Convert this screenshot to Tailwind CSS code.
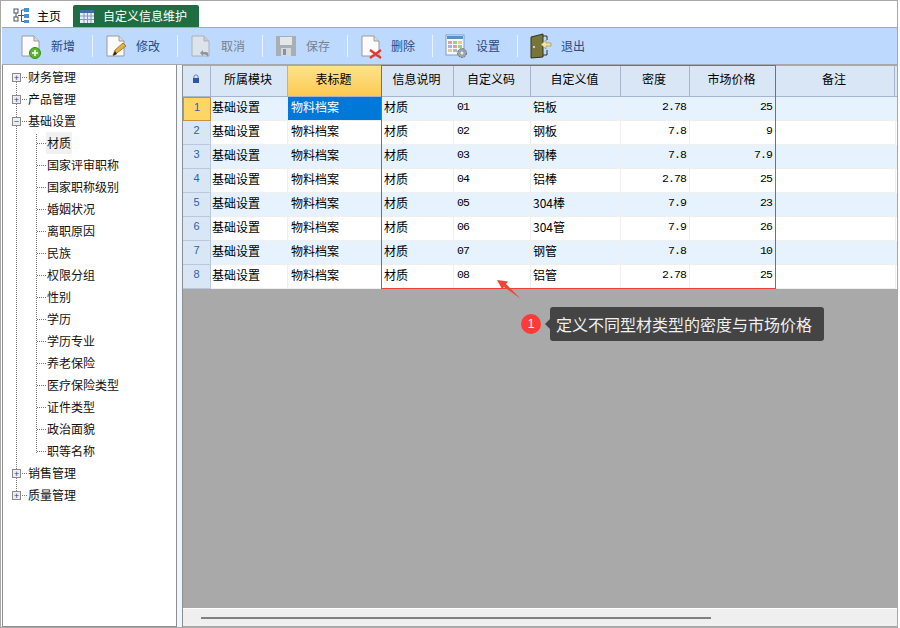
<!DOCTYPE html>
<html lang="zh"><head><meta charset="utf-8"><script src="https://cdn.jsdelivr.net/npm/@tailwindcss/browser@4"></script></head>
<body class="bg-white">
<div class="relative w-[900px] h-[628px] overflow-hidden bg-white text-[12px] leading-none text-black font-['Noto_Sans_CJK_SC','Liberation_Sans',sans-serif]">
 <div class="flex flex-col w-[898px] h-[628px] pt-[1px] pl-[1px] border-t border-l border-r border-b border-[#a8a8a8]">
  <!-- tabs -->
  <div class="flex items-end h-[25px] shrink-0 bg-white">
   <div class="flex items-center h-[23px] w-[71px] pl-[11px] gap-[7px]">
    <svg class="w-[17px] h-[17px]" viewBox="0 0 17 17"><rect x="1" y="2" width="4" height="4" fill="#fff" stroke="#44556e"/><rect x="1" y="10" width="4" height="4" fill="#fff" stroke="#44556e"/><rect x="11" y="1" width="5" height="4" fill="#4a8fd0"/><rect x="11" y="7" width="5" height="4" fill="#4a8fd0"/><rect x="11" y="13" width="5" height="3" fill="#4a8fd0"/><path d="M5 8.500H11M8.500 3V14.500M8.500 3H11M8.500 14.500H11M3 6V10" stroke="#555" fill="none"/></svg>
    <span>主页</span>
   </div>
   <div class="flex items-center h-[22px] w-[126px] bg-[#1f6e43] rounded-t-[2px] pl-[7px] gap-[9px] text-white">
    <svg class="w-[14px] h-[13px]" viewBox="0 0 14 13"><rect width="14" height="13" fill="#e8eef5"/><rect width="14" height="3" fill="#3f6ea8"/><path d="M0 6H14M0 9.500H14M4 3V13M7.500 3V13M11 3V13" stroke="#7d9cc4"/></svg>
    <span>自定义信息维护</span>
   </div>
  </div>
  <!-- toolbar -->
  <div class="flex items-center h-[37px] shrink-0 bg-[#bdd9fd] border-t border-[#a8a8a8] pl-[6px] text-[#2c4a85]">
   <div class="flex items-center w-[85px] h-full pl-[12px] gap-[9px]">
    <svg class="w-[22px] h-[26px]" viewBox="0 0 22 26"><path d="M2 3H14L19 8V23H2Z" fill="#fbfbfb" stroke="#9a9a9a"/><path d="M14 3V8H19" fill="#ddd" stroke="#9a9a9a"/><circle cx="15" cy="20" r="5.500" fill="#5cb531" stroke="#3f8a1f"/><path d="M12 20H18M15 17V23" stroke="#fff" stroke-width="1.500"/></svg>
    <span>新增</span>
   </div>
   <div class="w-px h-[22px] bg-[#e9f3ff] -ml-px"></div>
   <div class="flex items-center w-[85px] h-full pl-[12px] gap-[9px]">
    <svg class="w-[22px] h-[26px]" viewBox="0 0 22 26"><path d="M2 3H14L19 8V23H2Z" fill="#fbfbfb" stroke="#9a9a9a"/><path d="M14 3V8H19" fill="#ddd" stroke="#9a9a9a"/><path d="M8 22L10 17L18 10L21 13L12 20Z" fill="#e5b13d" stroke="#7a5b1c" stroke-width=".7"/><path d="M8 23L10 18L12 21Z" fill="#222"/></svg>
    <span>修改</span>
   </div>
   <div class="w-px h-[22px] bg-[#e9f3ff] -ml-px"></div>
   <div class="flex items-center w-[85px] h-full pl-[12px] gap-[9px] text-[#77828f]">
    <svg class="w-[22px] h-[26px]" viewBox="0 0 22 26"><path d="M2 3H14L19 8V23H2Z" fill="#dde3ea" stroke="#aab1ba"/><path d="M14 3V8H19" fill="#c9ced5" stroke="#aab1ba"/><path d="M10 20L13 17V19H16C18 19 19 21 18 24C17 22 16 21.500 13 21.500V23Z" fill="#8d959e"/></svg>
    <span>取消</span>
   </div>
   <div class="w-px h-[22px] bg-[#e9f3ff] -ml-px"></div>
   <div class="flex items-center w-[85px] h-full pl-[12px] gap-[9px] text-[#77828f]">
    <svg class="w-[22px] h-[26px]" viewBox="0 0 22 26"><path d="M1 3H21V23H1Z" fill="#a9aeb4"/><rect x="5" y="4" width="12" height="8" fill="#e4e7ea"/><rect x="6" y="15" width="10" height="8" fill="#d5d8dc"/><rect x="8" y="16" width="3" height="6" fill="#8d9298"/></svg>
    <span>保存</span>
   </div>
   <div class="w-px h-[22px] bg-[#e9f3ff] -ml-px"></div>
   <div class="flex items-center w-[85px] h-full pl-[12px] gap-[9px]">
    <svg class="w-[22px] h-[26px]" viewBox="0 0 22 26"><path d="M2 3H14L19 8V23H2Z" fill="#fbfbfb" stroke="#9a9a9a"/><path d="M14 3V8H19" fill="#ddd" stroke="#9a9a9a"/><path d="M10 17L21 25M21 17L10 25" stroke="#e2382b" stroke-width="2.200"/></svg>
    <span>删除</span>
   </div>
   <div class="w-px h-[22px] bg-[#e9f3ff] -ml-px"></div>
   <div class="flex items-center w-[85px] h-full pl-[12px] gap-[9px]">
    <svg class="w-[22px] h-[26px]" viewBox="0 0 22 26"><rect x="1" y="2" width="18" height="20" fill="#f5f8fb" stroke="#7e9fc4"/><rect x="2" y="3" width="16" height="3" fill="#5d8fc9"/><rect x="3" y="8" width="4" height="3" fill="#e89d8d"/><rect x="8" y="8" width="4" height="3" fill="#9ccf8b"/><rect x="13" y="8" width="4" height="3" fill="#e8cf80"/><rect x="3" y="12" width="4" height="3" fill="#9db9de"/><rect x="8" y="12" width="4" height="3" fill="#e89d8d"/><rect x="13" y="12" width="4" height="3" fill="#9ccf8b"/><rect x="3" y="16" width="4" height="3" fill="#e8cf80"/><rect x="8" y="16" width="4" height="3" fill="#9db9de"/><circle cx="17" cy="20" r="4.500" fill="#9aa2aa" stroke="#6b7278" stroke-dasharray="2 1"/><circle cx="17" cy="20" r="1.500" fill="#eee"/></svg>
    <span>设置</span>
   </div>
   <div class="w-px h-[22px] bg-[#e9f3ff] -ml-px"></div>
   <div class="flex items-center w-[85px] h-full pl-[12px] gap-[9px]">
    <svg class="w-[22px] h-[26px]" viewBox="0 0 22 26"><path d="M1 4L13 1V24L1 25Z" fill="#77753a" stroke="#33331c"/><path d="M13 3H17V7M17 17V22H13" fill="none" stroke="#33331c"/><circle cx="4" cy="14" r="1" fill="#eee"/><path d="M21 10H16V7L11 11.500L16 16V13H21Z" fill="#f6e3a2" stroke="#9c9356" stroke-width=".7"/></svg>
    <span>退出</span>
   </div>
  </div>
  <!-- body -->
  <div class="flex flex-1 min-h-0 border-t border-[#a8a8a8]">
   <!-- tree -->
   <div class="relative w-[175px] shrink-0 border border-[#8f8f8f] border-t-0 bg-white pt-[1px] text-[#111]">
    <div class="absolute left-[13px] top-[17px] h-[413px] border-l border-dotted border-[#777]"></div>
    <div class="absolute left-[33px] top-[69px] h-[319px] border-l border-dotted border-[#777]"></div>
    <div class="flex items-center h-[22px] pl-[9px] relative"><span class="flex items-center justify-center w-[9px] h-[9px] border border-[#8a8a8a] bg-[#eeeeee] text-[#29408f] text-[9px]">+</span><span class="w-[5px] border-t border-dotted border-[#777] ml-[1px] mr-[1px]"></span><span>财务管理</span></div>
    <div class="flex items-center h-[22px] pl-[9px] relative"><span class="flex items-center justify-center w-[9px] h-[9px] border border-[#8a8a8a] bg-[#eeeeee] text-[#29408f] text-[9px]">+</span><span class="w-[5px] border-t border-dotted border-[#777] ml-[1px] mr-[1px]"></span><span>产品管理</span></div>
    <div class="flex items-center h-[22px] pl-[9px] relative"><span class="flex items-center justify-center w-[9px] h-[9px] border border-[#8a8a8a] bg-[#eeeeee] text-[#29408f] text-[9px]">−</span><span class="w-[5px] border-t border-dotted border-[#777] ml-[1px] mr-[1px]"></span><span>基础设置</span></div>
    <div class="flex items-center h-[22px] pl-[34px]"><span class="w-[9px] border-t border-dotted border-[#777]"></span><span class="flex items-center h-[22px] bg-[#f1f1f1] px-[1px]">材质</span></div>
    <div class="flex items-center h-[22px] pl-[34px]"><span class="w-[9px] border-t border-dotted border-[#777] mr-[1px]"></span><span>国家评审职称</span></div>
    <div class="flex items-center h-[22px] pl-[34px]"><span class="w-[9px] border-t border-dotted border-[#777] mr-[1px]"></span><span>国家职称级别</span></div>
    <div class="flex items-center h-[22px] pl-[34px]"><span class="w-[9px] border-t border-dotted border-[#777] mr-[1px]"></span><span>婚姻状况</span></div>
    <div class="flex items-center h-[22px] pl-[34px]"><span class="w-[9px] border-t border-dotted border-[#777] mr-[1px]"></span><span>离职原因</span></div>
    <div class="flex items-center h-[22px] pl-[34px]"><span class="w-[9px] border-t border-dotted border-[#777] mr-[1px]"></span><span>民族</span></div>
    <div class="flex items-center h-[22px] pl-[34px]"><span class="w-[9px] border-t border-dotted border-[#777] mr-[1px]"></span><span>权限分组</span></div>
    <div class="flex items-center h-[22px] pl-[34px]"><span class="w-[9px] border-t border-dotted border-[#777] mr-[1px]"></span><span>性别</span></div>
    <div class="flex items-center h-[22px] pl-[34px]"><span class="w-[9px] border-t border-dotted border-[#777] mr-[1px]"></span><span>学历</span></div>
    <div class="flex items-center h-[22px] pl-[34px]"><span class="w-[9px] border-t border-dotted border-[#777] mr-[1px]"></span><span>学历专业</span></div>
    <div class="flex items-center h-[22px] pl-[34px]"><span class="w-[9px] border-t border-dotted border-[#777] mr-[1px]"></span><span>养老保险</span></div>
    <div class="flex items-center h-[22px] pl-[34px]"><span class="w-[9px] border-t border-dotted border-[#777] mr-[1px]"></span><span>医疗保险类型</span></div>
    <div class="flex items-center h-[22px] pl-[34px]"><span class="w-[9px] border-t border-dotted border-[#777] mr-[1px]"></span><span>证件类型</span></div>
    <div class="flex items-center h-[22px] pl-[34px]"><span class="w-[9px] border-t border-dotted border-[#777] mr-[1px]"></span><span>政治面貌</span></div>
    <div class="flex items-center h-[22px] pl-[34px]"><span class="w-[9px] border-t border-dotted border-[#777] mr-[1px]"></span><span>职等名称</span></div>
    <div class="flex items-center h-[22px] pl-[9px] relative"><span class="flex items-center justify-center w-[9px] h-[9px] border border-[#8a8a8a] bg-[#eeeeee] text-[#29408f] text-[9px]">+</span><span class="w-[5px] border-t border-dotted border-[#777] ml-[1px] mr-[1px]"></span><span>销售管理</span></div>
    <div class="flex items-center h-[22px] pl-[9px] relative"><span class="flex items-center justify-center w-[9px] h-[9px] border border-[#8a8a8a] bg-[#eeeeee] text-[#29408f] text-[9px]">+</span><span class="w-[5px] border-t border-dotted border-[#777] ml-[1px] mr-[1px]"></span><span>质量管理</span></div>
   </div>
   <!-- splitter -->
   <div class="w-[5px] shrink-0 bg-[#eef6ff]"></div>
   <!-- grid -->
   <div class="flex flex-col flex-1 min-w-0 bg-[#a9a9a9] border-l border-[#8f8f8f]">
    <div class="flex h-[32px] shrink-0 bg-[#d9e6f5] border-t border-[#a9a9a9] border-b border-b-[#a4b5cd] text-[12px] [&>div]:flex [&>div]:items-center [&>div]:justify-center [&>div]:border-r [&>div]:border-[#a4b5cd] [&>div]:pb-[4px] [&>div]:pr-[2px]">
     <div class="w-[28px]"><svg class="w-[8px] h-[10px]" viewBox="0 0 8 10"><path d="M2 4V2.500C2 .5 6 .5 6 2.500V4" fill="none" stroke="#5a74a8"/><rect x="1" y="4" width="6" height="5" fill="#2f55a8"/></svg></div>
     <div class="w-[77px]">所属模块</div>
     <div class="w-[94px] bg-linear-to-b from-[#fde38a] to-[#fcc94f] border-[#c8a24a]">表标题</div>
     <div class="w-[72px]">信息说明</div>
     <div class="w-[77px]">自定义码</div>
     <div class="w-[90px]">自定义值</div>
     <div class="w-[69px]">密度</div>
     <div class="w-[86px]">市场价格</div>
     <div class="w-[119px]">备注</div>
    </div>
    <div class="flex flex-col shrink-0 [&>div]:flex [&>div]:h-[24px] [&>div>div]:flex [&>div>div]:items-center [&>div>div]:pb-[4px] [&>div>div]:border-r [&>div>div]:border-b [&>div>div]:border-[#efefef]">
     <div class="bg-[#e6f3fe]"><div class="w-[28px] justify-center !bg-[#fdd663] !border-[#c8923a] border text-[#2a62a8] text-[11px] font-['Liberation_Sans']">1</div><div class="w-[77px] pl-px">基础设置</div><div class="w-[94px] pl-[3px] bg-[#0078d7] text-white">物料档案</div><div class="w-[72px] pl-[2px]">材质</div><div class="w-[77px] pl-[3px] font-['Liberation_Mono'] text-[11.500px] tracking-[-0.9px]">01</div><div class="w-[90px] pl-[2px]">铝板</div><div class="w-[69px] justify-end pr-[3px] font-['Liberation_Mono'] text-[11.500px] tracking-[-0.9px]">2.78</div><div class="w-[86px] justify-end pr-[3px] font-['Liberation_Mono'] text-[11.500px] tracking-[-0.9px]">25</div><div class="w-[120px]"></div></div>
     <div class="bg-white"><div class="w-[28px] justify-center !bg-[#d9e6f5] !border-[#b9c8dc] text-[#2a62a8] text-[11px] font-['Liberation_Sans']">2</div><div class="w-[77px] pl-px">基础设置</div><div class="w-[94px] pl-[3px]">物料档案</div><div class="w-[72px] pl-[2px]">材质</div><div class="w-[77px] pl-[3px] font-['Liberation_Mono'] text-[11.500px] tracking-[-0.9px]">02</div><div class="w-[90px] pl-[2px]">钢板</div><div class="w-[69px] justify-end pr-[3px] font-['Liberation_Mono'] text-[11.500px] tracking-[-0.9px]">7.8</div><div class="w-[86px] justify-end pr-[3px] font-['Liberation_Mono'] text-[11.500px] tracking-[-0.9px]">9</div><div class="w-[120px]"></div></div>
     <div class="bg-[#e6f3fe]"><div class="w-[28px] justify-center !bg-[#d9e6f5] !border-[#b9c8dc] text-[#2a62a8] text-[11px] font-['Liberation_Sans']">3</div><div class="w-[77px] pl-px">基础设置</div><div class="w-[94px] pl-[3px]">物料档案</div><div class="w-[72px] pl-[2px]">材质</div><div class="w-[77px] pl-[3px] font-['Liberation_Mono'] text-[11.500px] tracking-[-0.9px]">03</div><div class="w-[90px] pl-[2px]">钢棒</div><div class="w-[69px] justify-end pr-[3px] font-['Liberation_Mono'] text-[11.500px] tracking-[-0.9px]">7.8</div><div class="w-[86px] justify-end pr-[3px] font-['Liberation_Mono'] text-[11.500px] tracking-[-0.9px]">7.9</div><div class="w-[120px]"></div></div>
     <div class="bg-white"><div class="w-[28px] justify-center !bg-[#d9e6f5] !border-[#b9c8dc] text-[#2a62a8] text-[11px] font-['Liberation_Sans']">4</div><div class="w-[77px] pl-px">基础设置</div><div class="w-[94px] pl-[3px]">物料档案</div><div class="w-[72px] pl-[2px]">材质</div><div class="w-[77px] pl-[3px] font-['Liberation_Mono'] text-[11.500px] tracking-[-0.9px]">04</div><div class="w-[90px] pl-[2px]">铝棒</div><div class="w-[69px] justify-end pr-[3px] font-['Liberation_Mono'] text-[11.500px] tracking-[-0.9px]">2.78</div><div class="w-[86px] justify-end pr-[3px] font-['Liberation_Mono'] text-[11.500px] tracking-[-0.9px]">25</div><div class="w-[120px]"></div></div>
     <div class="bg-[#e6f3fe]"><div class="w-[28px] justify-center !bg-[#d9e6f5] !border-[#b9c8dc] text-[#2a62a8] text-[11px] font-['Liberation_Sans']">5</div><div class="w-[77px] pl-px">基础设置</div><div class="w-[94px] pl-[3px]">物料档案</div><div class="w-[72px] pl-[2px]">材质</div><div class="w-[77px] pl-[3px] font-['Liberation_Mono'] text-[11.500px] tracking-[-0.9px]">05</div><div class="w-[90px] pl-[2px]">304棒</div><div class="w-[69px] justify-end pr-[3px] font-['Liberation_Mono'] text-[11.500px] tracking-[-0.9px]">7.9</div><div class="w-[86px] justify-end pr-[3px] font-['Liberation_Mono'] text-[11.500px] tracking-[-0.9px]">23</div><div class="w-[120px]"></div></div>
     <div class="bg-white"><div class="w-[28px] justify-center !bg-[#d9e6f5] !border-[#b9c8dc] text-[#2a62a8] text-[11px] font-['Liberation_Sans']">6</div><div class="w-[77px] pl-px">基础设置</div><div class="w-[94px] pl-[3px]">物料档案</div><div class="w-[72px] pl-[2px]">材质</div><div class="w-[77px] pl-[3px] font-['Liberation_Mono'] text-[11.500px] tracking-[-0.9px]">06</div><div class="w-[90px] pl-[2px]">304管</div><div class="w-[69px] justify-end pr-[3px] font-['Liberation_Mono'] text-[11.500px] tracking-[-0.9px]">7.9</div><div class="w-[86px] justify-end pr-[3px] font-['Liberation_Mono'] text-[11.500px] tracking-[-0.9px]">26</div><div class="w-[120px]"></div></div>
     <div class="bg-[#e6f3fe]"><div class="w-[28px] justify-center !bg-[#d9e6f5] !border-[#b9c8dc] text-[#2a62a8] text-[11px] font-['Liberation_Sans']">7</div><div class="w-[77px] pl-px">基础设置</div><div class="w-[94px] pl-[3px]">物料档案</div><div class="w-[72px] pl-[2px]">材质</div><div class="w-[77px] pl-[3px] font-['Liberation_Mono'] text-[11.500px] tracking-[-0.9px]">07</div><div class="w-[90px] pl-[2px]">钢管</div><div class="w-[69px] justify-end pr-[3px] font-['Liberation_Mono'] text-[11.500px] tracking-[-0.9px]">7.8</div><div class="w-[86px] justify-end pr-[3px] font-['Liberation_Mono'] text-[11.500px] tracking-[-0.9px]">10</div><div class="w-[120px]"></div></div>
     <div class="bg-white"><div class="w-[28px] justify-center !bg-[#d9e6f5] !border-[#b9c8dc] text-[#2a62a8] text-[11px] font-['Liberation_Sans']">8</div><div class="w-[77px] pl-px">基础设置</div><div class="w-[94px] pl-[3px]">物料档案</div><div class="w-[72px] pl-[2px]">材质</div><div class="w-[77px] pl-[3px] font-['Liberation_Mono'] text-[11.500px] tracking-[-0.9px]">08</div><div class="w-[90px] pl-[2px]">铝管</div><div class="w-[69px] justify-end pr-[3px] font-['Liberation_Mono'] text-[11.500px] tracking-[-0.9px]">2.78</div><div class="w-[86px] justify-end pr-[3px] font-['Liberation_Mono'] text-[11.500px] tracking-[-0.9px]">25</div><div class="w-[120px]"></div></div>
    </div>
    <div class="flex-1"></div>
    <div class="flex items-center h-[18px] shrink-0 bg-[#efefef] border-t border-white pl-[18px] mb-[1px]"><div class="w-[510px] h-[2px] bg-[#808080]"></div></div>
   </div>
  </div>
 </div>
 <!-- annotations -->
 <div class="absolute left-[381px] top-[65px] w-[395px] h-[224px] border border-[#e8413a]"></div>
 <svg class="absolute left-[490px] top-[275px] w-[40px] h-[30px]" viewBox="0 0 40 30"><path d="M7 5L18 6.500L16 9L31 24L14 12L12 14Z" fill="#f0433a"/></svg>
 <div class="absolute left-[521px] top-[314px] flex items-center justify-center w-[20px] h-[20px] rounded-full bg-[#fb3a3a] text-white text-[12px] font-['Liberation_Sans']">1</div>
 <div class="absolute left-[550px] top-[307px] flex items-center h-[34px] w-[274px] pl-[6px] rounded-[3px] bg-[#444444] text-[#f0f0f0] text-[16px] whitespace-nowrap before:absolute before:-left-[5px] before:top-[12px] before:border-y-[5px] before:border-r-[5px] before:border-y-transparent before:border-r-[#444444]">定义不同型材类型的密度与市场价格</div>
</div>
</body></html>
